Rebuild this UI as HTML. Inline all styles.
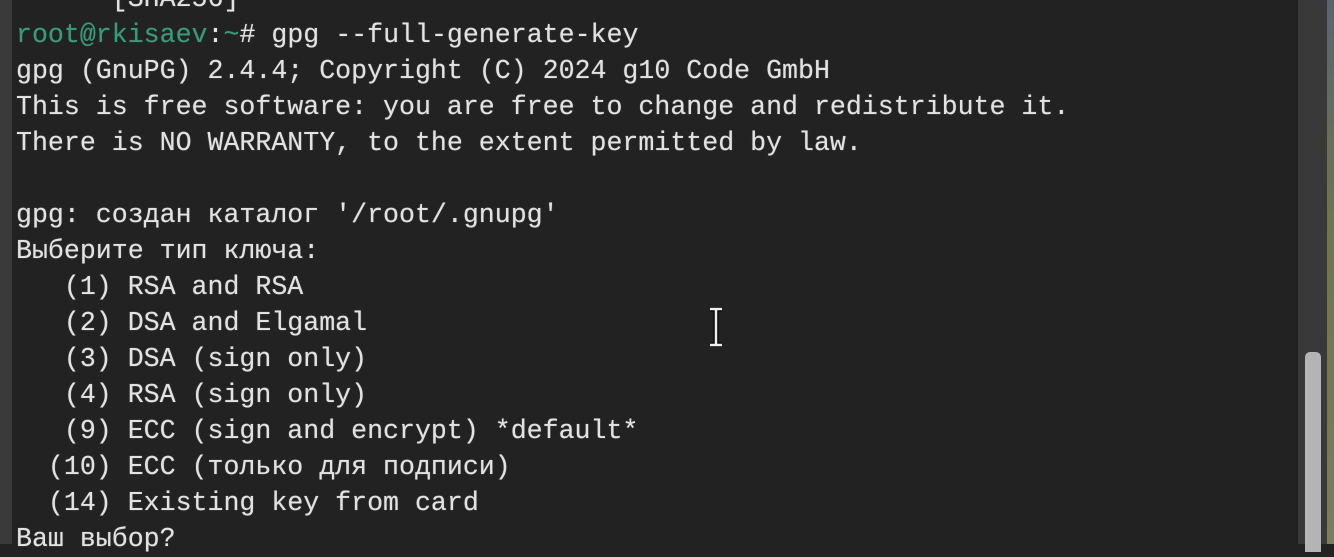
<!DOCTYPE html>
<html><head><meta charset="utf-8"><style>
html,body{margin:0;padding:0;width:1334px;height:544px;overflow:hidden;background:#222;}
.l{position:absolute;left:0;top:0;width:12px;height:544px;background:#3a3a3a;}
.t{position:absolute;left:16px;top:-19px;margin:0;font-family:"Liberation Mono","DejaVu Sans Mono",monospace;font-size:26.6px;line-height:36px;color:#e2e2e2;white-space:pre;text-shadow:0 0 1px rgba(226,226,226,0.6);}
.g{color:#3a9a78;text-shadow:0 0 1px rgba(58,154,120,0.6);}
.sb{position:absolute;left:1298px;top:0;width:29px;height:544px;background:#393939;}
.th{position:absolute;left:1305px;top:352px;width:16px;height:200px;background:#b4b4b4;border-radius:5px 5px 0 0;}
.e{position:absolute;left:1327px;top:0;width:7px;height:544px;background:linear-gradient(#5a6470,#6e7350 40%,#7a7d5e);}
.cur{position:absolute;left:706px;top:307px;width:20px;height:40px;}
</style></head><body>
<div class="l"></div>
<pre class="t">      [SHA256]
<span class="g">root@rkisaev</span>:<span class="g">~</span># gpg --full-generate-key
gpg (GnuPG) 2.4.4; Copyright (C) 2024 g10 Code GmbH
This is free software: you are free to change and redistribute it.
There is NO WARRANTY, to the extent permitted by law.

gpg: создан каталог '/root/.gnupg'
Выберите тип ключа:
   (1) RSA and RSA
   (2) DSA and Elgamal
   (3) DSA (sign only)
   (4) RSA (sign only)
   (9) ECC (sign and encrypt) *default*
  (10) ECC (только для подписи)
  (14) Existing key from card
Ваш выбор?</pre>
<svg class="cur" viewBox="0 0 20 40"><path d="M4 2h12M10 2v36M4 38h12" stroke="#000" stroke-width="5" fill="none"/><path d="M4 2h12M10 2v36M4 38h12" stroke="#eee" stroke-width="2.5" fill="none"/></svg>
<div class="sb"></div><div class="th"></div><div class="e"></div>
</body></html>
